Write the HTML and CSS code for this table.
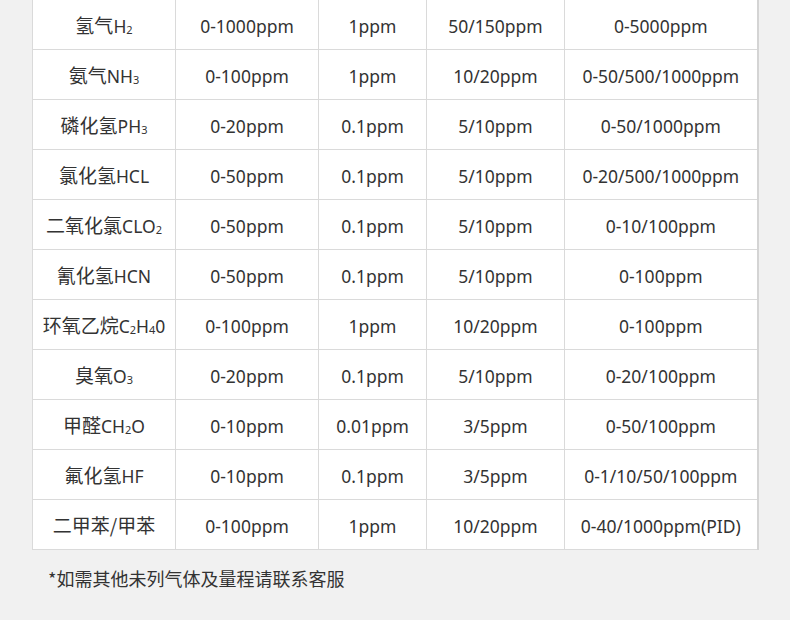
FILE: index.html
```html
<!DOCTYPE html>
<html lang="zh">
<head>
<meta charset="utf-8">
<link rel="stylesheet" href="styles.css">
</head>
<body>
<div class="page">
<table class="spec">
<colgroup><col class="c1"><col class="c2"><col class="c3"><col class="c4"><col class="c5"></colgroup>
<tbody>
<tr><td><span class="zh">氢气</span>H<sub>2</sub></td><td>0-1000ppm</td><td>1ppm</td><td>50/150ppm</td><td>0-5000ppm</td></tr>
<tr><td><span class="zh">氨气</span>NH<sub>3</sub></td><td>0-100ppm</td><td>1ppm</td><td>10/20ppm</td><td>0-50/500/1000ppm</td></tr>
<tr><td><span class="zh">磷化氢</span>PH<sub>3</sub></td><td>0-20ppm</td><td>0.1ppm</td><td>5/10ppm</td><td>0-50/1000ppm</td></tr>
<tr><td><span class="zh">氯化氢</span>HCL</td><td>0-50ppm</td><td>0.1ppm</td><td>5/10ppm</td><td>0-20/500/1000ppm</td></tr>
<tr><td><span class="zh">二氧化氯</span>CLO<sub>2</sub></td><td>0-50ppm</td><td>0.1ppm</td><td>5/10ppm</td><td>0-10/100ppm</td></tr>
<tr><td><span class="zh">氰化氢</span>HCN</td><td>0-50ppm</td><td>0.1ppm</td><td>5/10ppm</td><td>0-100ppm</td></tr>
<tr><td><span class="zh">环氧乙烷</span>C<sub>2</sub>H<sub>4</sub>0</td><td>0-100ppm</td><td>1ppm</td><td>10/20ppm</td><td>0-100ppm</td></tr>
<tr><td><span class="zh">臭氧</span>O<sub>3</sub></td><td>0-20ppm</td><td>0.1ppm</td><td>5/10ppm</td><td>0-20/100ppm</td></tr>
<tr><td><span class="zh">甲醛</span>CH<sub>2</sub>O</td><td>0-10ppm</td><td>0.01ppm</td><td>3/5ppm</td><td>0-50/100ppm</td></tr>
<tr><td><span class="zh">氟化氢</span>HF</td><td>0-10ppm</td><td>0.1ppm</td><td>3/5ppm</td><td>0-1/10/50/100ppm</td></tr>
<tr><td><span class="zh">二甲苯/甲苯</span></td><td>0-100ppm</td><td>1ppm</td><td>10/20ppm</td><td>0-40/1000ppm(PID)</td></tr>
</tbody>
</table>
<p class="note">*如需其他未列气体及量程请联系客服</p>
</div>
</body>
</html>
```
FILE: styles.css
```css
html, body {
  margin: 0;
  padding: 0;
  background: #f1f1f1;
}
body {
  width: 790px;
  height: 620px;
  overflow: hidden;
  font-family: "Noto Sans", "Noto Sans CJK SC", sans-serif;
  color: #333;
}
.page {
  padding-left: 32px;
}
.spec {
  margin-top: -1px;
  border-collapse: collapse;
  table-layout: fixed;
  width: 725px;
  background: #fff;
  border-right: 2px solid #d4d4d4;
}
.c1 { width: 143px; }
.c2 { width: 143px; }
.c3 { width: 108px; }
.c4 { width: 138px; }
.c5 { width: 193px; }
.spec td {
  border: 1px solid #dadada;
  height: 47px;
  padding: 2px 0 0;
  text-align: center;
  font-size: 17.5px;
  font-weight: 400;
  line-height: 20px;
  white-space: nowrap;
}
.zh {
  font-family: "Noto Sans CJK SC", sans-serif;
  font-size: 19px;
}
.spec sub {
  font-size: 11px;
  vertical-align: -1px;
  line-height: 0;
}
.note {
  margin: 17px 0 0 16px;
  font-family: "Noto Sans CJK SC", sans-serif;
  font-size: 18px;
  line-height: 22px;
}
```
